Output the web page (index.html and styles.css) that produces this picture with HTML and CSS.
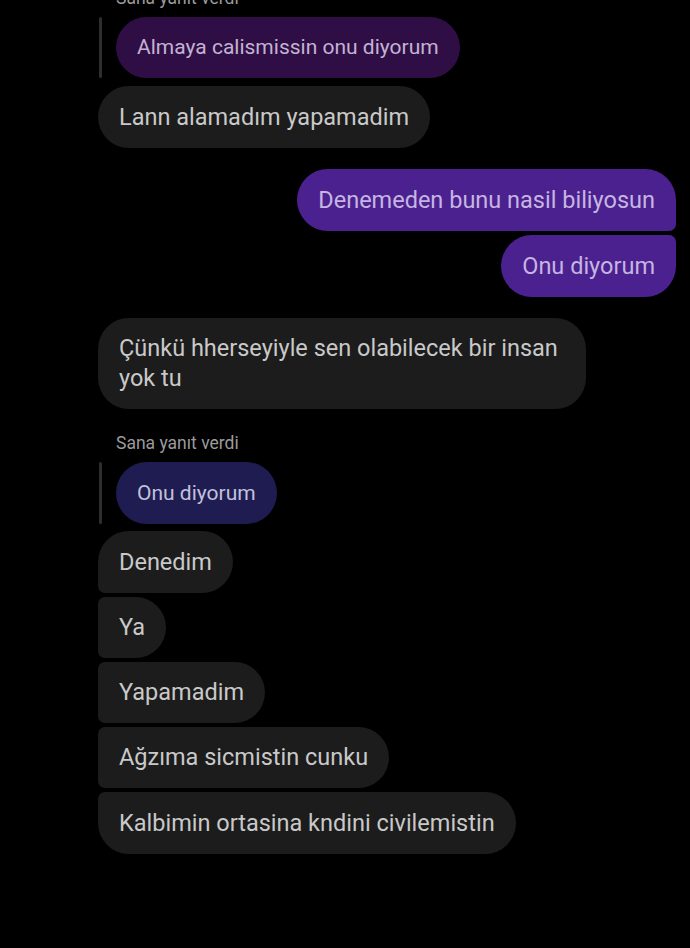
FILE: index.html
```html
<!DOCTYPE html>
<html lang="tr">
<head>
  <meta charset="UTF-8">
  <meta name="viewport" content="width=device-width, initial-scale=1.0">
  <title>Sohbet</title>
  <link rel="stylesheet" href="styles.css">
</head>
<body>
  <div class="chat">
    <!-- first reply -->
    <div class="reply-label">Sana yanıt verdi</div>
    <div class="reply">
      <div class="reply-bar"></div>
      <div class="bubble quote-purple">Almaya calismissin onu diyorum</div>
    </div>
    <div class="bubble in gap-s">Lann alamadım yapamadim</div>

    <div class="bubble out out-first gap-l">Denemeden bunu nasil biliyosun</div>
    <div class="bubble out out-last gap-xs">Onu diyorum</div>

    <div class="bubble in wide gap-l">Çünkü hherseyiyle sen olabilecek bir insan yok tu</div>

    <!-- second reply -->
    <div class="reply-label gap-label">Sana yanıt verdi</div>
    <div class="reply">
      <div class="reply-bar"></div>
      <div class="bubble quote-navy">Onu diyorum</div>
    </div>
    <div class="bubble in in-first">Denedim</div>
    <div class="bubble in in-mid">Ya</div>
    <div class="bubble in in-mid">Yapamadim</div>
    <div class="bubble in in-mid">Ağzıma sicmistin cunku</div>
    <div class="bubble in in-last">Kalbimin ortasina kndini civilemistin</div>
  </div>
</body>
</html>
```

FILE: styles.css
```css
/* Page */
body {
  margin: 0;
  background-color: #000;
  font-family: Roboto, "Noto Sans", sans-serif;
  overflow: hidden;
}
.chat {
  display: flex;
  flex-direction: column;
  align-items: flex-start;
  margin-top: -12px;
  padding: 0 14px 0 98px;
}

/* Bubbles */
.bubble {
  font-size: 23.5px;
  line-height: 30px;
  padding: 16px 21px;
  border-radius: 31px;
  color: #c9c9c9;
  max-width: 446px;
}
.in {
  background-color: #1c1c1c;
}
.wide {
  padding-top: 15px;
  padding-bottom: 16px;
}
.in-first {
  margin-top: 7px;
  border-bottom-left-radius: 7px;
}
.in-mid {
  margin-top: 4px;
  padding-top: 15px;
  border-top-left-radius: 7px;
  border-bottom-left-radius: 7px;
}
.in-last {
  margin-top: 4px;
  border-top-left-radius: 7px;
}
.out {
  align-self: flex-end;
  background-color: #4b2190;
  color: #c6b5e0;
}
.out-first {
  border-bottom-right-radius: 7px;
}
.out-last {
  border-top-right-radius: 7px;
}

/* Replies */
.reply-label {
  font-size: 17.5px;
  line-height: 20px;
  color: #9b9b9b;
  padding-left: 18px;
}
.reply {
  display: flex;
  align-items: stretch;
  gap: 14px;
  margin-top: 9px;
  padding-left: 1px;
}
.reply-bar {
  width: 3px;
  border-radius: 2px;
  background-color: #2e2e2e;
}
.quote-purple,
.quote-navy {
  font-size: 21px;
}
.quote-purple {
  background-color: #2f0e46;
  color: #c3b3d3;
  padding-top: 15px;
}
.quote-navy {
  background-color: #1f1c52;
  color: #c2c0dc;
}

/* Spacing */
.gap-xs {
  margin-top: 4px;
}
.gap-s {
  margin-top: 8px;
}
.gap-l {
  margin-top: 21px;
}
.gap-label {
  margin-top: 24px;
}
```
